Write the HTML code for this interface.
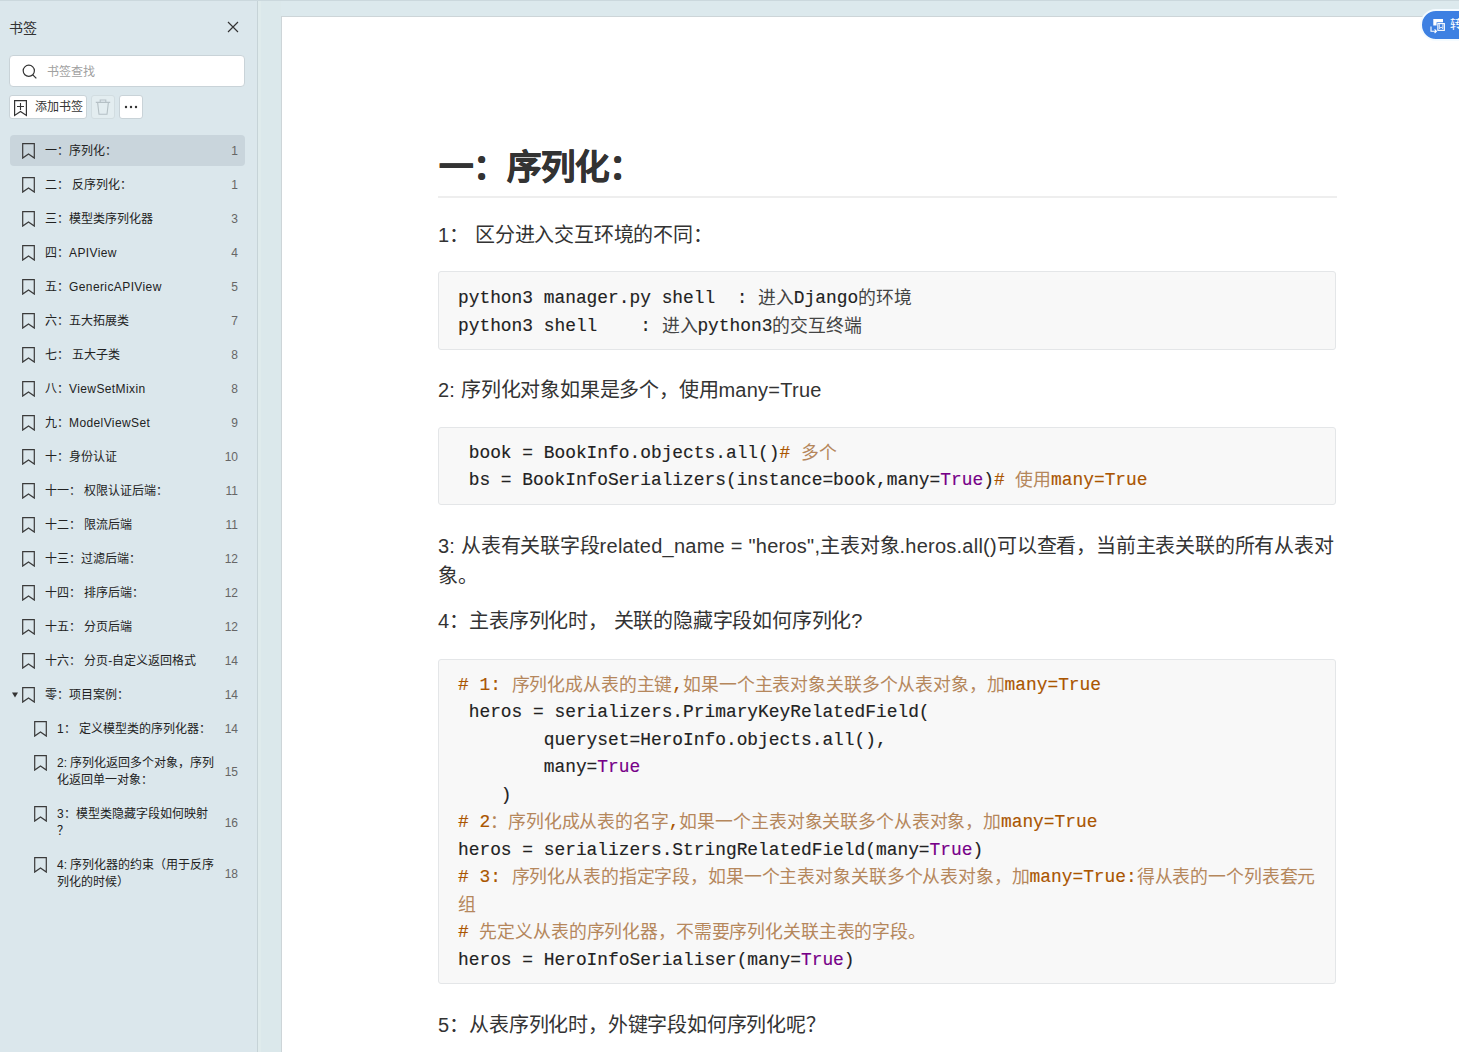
<!DOCTYPE html>
<html lang="zh-CN">
<head>
<meta charset="utf-8">
<style>
html,body{margin:0;padding:0;}
body{width:1459px;height:1052px;overflow:hidden;position:relative;background:#dce9ed;font-family:"Liberation Sans",sans-serif;color:#333;}
.abs{position:absolute;}
#topline{left:0;top:0;width:1459px;height:1px;background:#cbd8dd;}
#sidebar{left:0;top:0;width:257px;height:1052px;background:#dbe7ec;}
#gap{left:261px;top:0;width:20px;height:1052px;background:#dbe8eb;}
#strip{left:258px;top:0;width:3px;height:1052px;background:#dfebec;}
#sbborder{left:257px;top:0;width:1px;height:1052px;background:#c6d3d7;}
#sbtitle{left:9px;top:18px;font-size:14px;line-height:20px;color:#333;}
#close{left:226px;top:20px;width:14px;height:14px;}
#search{left:9px;top:55px;width:234px;height:30px;background:#fff;border:1px solid #c9d3d8;border-radius:4px;}
#search .ph{position:absolute;left:37px;top:8px;font-size:12px;line-height:16px;color:#a0a0a0;}
#search svg{position:absolute;left:12px;top:8px;}
.btn{position:absolute;top:95px;height:22px;background:#fff;border:1px solid #c9d3d8;border-radius:3px;}
#addbtn{left:9px;width:76px;}
#addbtn .t{position:absolute;left:25px;top:2.5px;font-size:12px;line-height:16px;color:#333;}
#delbtn{left:91px;width:22px;background:#e3edf0;border-color:#d2dde1;}
#morebtn{left:119px;width:22px;}
.item{position:absolute;left:10px;width:235px;height:31px;}
.item.sel{background:#c9d5dc;border-radius:4px;}
.item .ic{position:absolute;top:8px;}
.item .tx{position:absolute;top:8px;font-size:12px;line-height:17px;color:#222;white-space:nowrap;}
.lts{letter-spacing:0.4px;}
.item .pg{position:absolute;right:7px;top:8px;font-size:12px;line-height:17px;color:#666;}
#page{left:281px;top:16px;width:1200px;height:1100px;background:#fff;border-top:1px solid #cdd5d8;border-left:1px solid #cdd5d8;}
.p{position:absolute;left:438px;font-size:20px;letter-spacing:-0.2px;line-height:30px;color:#333;white-space:nowrap;}
h1{position:absolute;left:439px;top:0;margin:0;font-size:34.5px;line-height:50px;font-weight:bold;color:#333;-webkit-text-stroke:0.7px #333;white-space:nowrap;}
#hr{left:438px;top:196px;width:899px;height:2px;background:#eeeeee;}
.code{position:absolute;left:438px;width:896px;background:#f8f8f8;border:1px solid #e4e6e8;border-radius:3px;}
.ln{position:absolute;left:19px;height:27.5px;font-family:"Liberation Mono",monospace;font-size:17.87px;line-height:27.5px;color:#222;white-space:pre;-webkit-text-stroke:0.15px currentColor;}
.lt{letter-spacing:0.25px;}
.cm{color:#aa5500;}
.zh{-webkit-text-stroke:0;letter-spacing:-0.14px;position:relative;top:1px;}
.zh{color:#444;}
.cm .zh{color:#b5875c;}
.at{color:#770088;}
#blue{left:1420px;top:9px;width:60px;height:28px;background:#3d80e2;border:2px solid #f4fbff;border-radius:16px;}
</style>
</head>
<body>
<div class="abs" id="sidebar"></div>
<div class="abs" id="sbborder"></div>
<div class="abs" id="strip"></div>
<div class="abs" id="gap"></div>
<div class="abs" id="topline"></div>
<div class="abs" id="page"></div>

<!-- sidebar header -->
<div class="abs" id="sbtitle">书签</div>
<svg class="abs" id="close" viewBox="0 0 14 14"><path d="M2 2L12 12M12 2L2 12" stroke="#333" stroke-width="1.15" fill="none"/></svg>
<div class="abs" id="search">
  <svg width="16" height="16" viewBox="0 0 16 16"><circle cx="6.8" cy="6.8" r="5.6" stroke="#333" stroke-width="1.2" fill="none"/><path d="M10.8 10.8L14.3 14.3" stroke="#333" stroke-width="1.2"/></svg>
  <div class="ph">书签查找</div>
</div>
<div class="btn" id="addbtn">
  <svg style="position:absolute;left:3px;top:3px" width="15" height="18" viewBox="0 0 15 18"><path d="M1.6 1.6H13.4V16.4L7.5 12.4L1.6 16.4Z" stroke="#333" stroke-width="1.2" fill="none"/><path d="M7.5 4V11M4 7.5H11" stroke="#333" stroke-width="1.1"/></svg>
  <div class="t">添加书签</div>
</div>
<div class="btn" id="delbtn">
  <svg style="position:absolute;left:3px;top:3px" width="16" height="16" viewBox="0 0 16 16"><path d="M0.8 3.4H15.2M5.2 3.4V1H10.8V3.4M2.6 3.4L4 15.2H12L13.4 3.4" stroke="#b5c0c5" stroke-width="1.1" fill="none"/></svg>
</div>
<div class="btn" id="morebtn">
  <svg style="position:absolute;left:3px;top:9px" width="16" height="4" viewBox="0 0 16 4"><circle cx="3" cy="2" r="1.2" fill="#333"/><circle cx="8" cy="2" r="1.2" fill="#333"/><circle cx="13" cy="2" r="1.2" fill="#333"/></svg>
</div>

<!-- ITEMS -->
<div class="item sel" style="top:135px;height:31px"><svg class="ic" style="left:12px" width="13" height="16" viewBox="0 0 13 16"><path d="M0.7 0.7H12.3V15.1L6.5 11.1L0.7 15.1Z" stroke="#3a3a3a" stroke-width="1.2" fill="none"/></svg><div class="tx" style="left:35px">一：序列化：</div><div class="pg" style="top:8.0px">1</div></div>
<div class="item" style="top:169px;height:31px"><svg class="ic" style="left:12px" width="13" height="16" viewBox="0 0 13 16"><path d="M0.7 0.7H12.3V15.1L6.5 11.1L0.7 15.1Z" stroke="#3a3a3a" stroke-width="1.2" fill="none"/></svg><div class="tx" style="left:35px">二： 反序列化：</div><div class="pg" style="top:8.0px">1</div></div>
<div class="item" style="top:203px;height:31px"><svg class="ic" style="left:12px" width="13" height="16" viewBox="0 0 13 16"><path d="M0.7 0.7H12.3V15.1L6.5 11.1L0.7 15.1Z" stroke="#3a3a3a" stroke-width="1.2" fill="none"/></svg><div class="tx" style="left:35px">三：模型类序列化器</div><div class="pg" style="top:8.0px">3</div></div>
<div class="item" style="top:237px;height:31px"><svg class="ic" style="left:12px" width="13" height="16" viewBox="0 0 13 16"><path d="M0.7 0.7H12.3V15.1L6.5 11.1L0.7 15.1Z" stroke="#3a3a3a" stroke-width="1.2" fill="none"/></svg><div class="tx" style="left:35px">四：<span class="lts">APIView</span></div><div class="pg" style="top:8.0px">4</div></div>
<div class="item" style="top:271px;height:31px"><svg class="ic" style="left:12px" width="13" height="16" viewBox="0 0 13 16"><path d="M0.7 0.7H12.3V15.1L6.5 11.1L0.7 15.1Z" stroke="#3a3a3a" stroke-width="1.2" fill="none"/></svg><div class="tx" style="left:35px">五：<span class="lts">GenericAPIView</span></div><div class="pg" style="top:8.0px">5</div></div>
<div class="item" style="top:305px;height:31px"><svg class="ic" style="left:12px" width="13" height="16" viewBox="0 0 13 16"><path d="M0.7 0.7H12.3V15.1L6.5 11.1L0.7 15.1Z" stroke="#3a3a3a" stroke-width="1.2" fill="none"/></svg><div class="tx" style="left:35px">六：五大拓展类</div><div class="pg" style="top:8.0px">7</div></div>
<div class="item" style="top:339px;height:31px"><svg class="ic" style="left:12px" width="13" height="16" viewBox="0 0 13 16"><path d="M0.7 0.7H12.3V15.1L6.5 11.1L0.7 15.1Z" stroke="#3a3a3a" stroke-width="1.2" fill="none"/></svg><div class="tx" style="left:35px">七： 五大子类</div><div class="pg" style="top:8.0px">8</div></div>
<div class="item" style="top:373px;height:31px"><svg class="ic" style="left:12px" width="13" height="16" viewBox="0 0 13 16"><path d="M0.7 0.7H12.3V15.1L6.5 11.1L0.7 15.1Z" stroke="#3a3a3a" stroke-width="1.2" fill="none"/></svg><div class="tx" style="left:35px">八：<span class="lts">ViewSetMixin</span></div><div class="pg" style="top:8.0px">8</div></div>
<div class="item" style="top:407px;height:31px"><svg class="ic" style="left:12px" width="13" height="16" viewBox="0 0 13 16"><path d="M0.7 0.7H12.3V15.1L6.5 11.1L0.7 15.1Z" stroke="#3a3a3a" stroke-width="1.2" fill="none"/></svg><div class="tx" style="left:35px">九：<span class="lts">ModelViewSet</span></div><div class="pg" style="top:8.0px">9</div></div>
<div class="item" style="top:441px;height:31px"><svg class="ic" style="left:12px" width="13" height="16" viewBox="0 0 13 16"><path d="M0.7 0.7H12.3V15.1L6.5 11.1L0.7 15.1Z" stroke="#3a3a3a" stroke-width="1.2" fill="none"/></svg><div class="tx" style="left:35px">十：身份认证</div><div class="pg" style="top:8.0px">10</div></div>
<div class="item" style="top:475px;height:31px"><svg class="ic" style="left:12px" width="13" height="16" viewBox="0 0 13 16"><path d="M0.7 0.7H12.3V15.1L6.5 11.1L0.7 15.1Z" stroke="#3a3a3a" stroke-width="1.2" fill="none"/></svg><div class="tx" style="left:35px">十一： 权限认证后端：</div><div class="pg" style="top:8.0px">11</div></div>
<div class="item" style="top:509px;height:31px"><svg class="ic" style="left:12px" width="13" height="16" viewBox="0 0 13 16"><path d="M0.7 0.7H12.3V15.1L6.5 11.1L0.7 15.1Z" stroke="#3a3a3a" stroke-width="1.2" fill="none"/></svg><div class="tx" style="left:35px">十二： 限流后端</div><div class="pg" style="top:8.0px">11</div></div>
<div class="item" style="top:543px;height:31px"><svg class="ic" style="left:12px" width="13" height="16" viewBox="0 0 13 16"><path d="M0.7 0.7H12.3V15.1L6.5 11.1L0.7 15.1Z" stroke="#3a3a3a" stroke-width="1.2" fill="none"/></svg><div class="tx" style="left:35px">十三：过滤后端：</div><div class="pg" style="top:8.0px">12</div></div>
<div class="item" style="top:577px;height:31px"><svg class="ic" style="left:12px" width="13" height="16" viewBox="0 0 13 16"><path d="M0.7 0.7H12.3V15.1L6.5 11.1L0.7 15.1Z" stroke="#3a3a3a" stroke-width="1.2" fill="none"/></svg><div class="tx" style="left:35px">十四： 排序后端：</div><div class="pg" style="top:8.0px">12</div></div>
<div class="item" style="top:611px;height:31px"><svg class="ic" style="left:12px" width="13" height="16" viewBox="0 0 13 16"><path d="M0.7 0.7H12.3V15.1L6.5 11.1L0.7 15.1Z" stroke="#3a3a3a" stroke-width="1.2" fill="none"/></svg><div class="tx" style="left:35px">十五： 分页后端</div><div class="pg" style="top:8.0px">12</div></div>
<div class="item" style="top:645px;height:31px"><svg class="ic" style="left:12px" width="13" height="16" viewBox="0 0 13 16"><path d="M0.7 0.7H12.3V15.1L6.5 11.1L0.7 15.1Z" stroke="#3a3a3a" stroke-width="1.2" fill="none"/></svg><div class="tx" style="left:35px">十六： 分页-自定义返回格式</div><div class="pg" style="top:8.0px">14</div></div>
<div class="item" style="top:679px;height:31px"><svg class="abs" style="left:2px;top:13px" width="6" height="6" viewBox="0 0 6 6"><path d="M0 0.5H6L3 5.5Z" fill="#333"/></svg><svg class="ic" style="left:12px" width="13" height="16" viewBox="0 0 13 16"><path d="M0.7 0.7H12.3V15.1L6.5 11.1L0.7 15.1Z" stroke="#3a3a3a" stroke-width="1.2" fill="none"/></svg><div class="tx" style="left:35px">零：项目案例：</div><div class="pg" style="top:8.0px">14</div></div>
<div class="item" style="top:713px;height:31px"><svg class="ic" style="left:24px" width="13" height="16" viewBox="0 0 13 16"><path d="M0.7 0.7H12.3V15.1L6.5 11.1L0.7 15.1Z" stroke="#3a3a3a" stroke-width="1.2" fill="none"/></svg><div class="tx" style="left:47px">1：  定义模型类的序列化器：</div><div class="pg" style="top:8.0px">14</div></div>
<div class="item" style="top:747px;height:48px"><svg class="ic" style="left:24px" width="13" height="16" viewBox="0 0 13 16"><path d="M0.7 0.7H12.3V15.1L6.5 11.1L0.7 15.1Z" stroke="#3a3a3a" stroke-width="1.2" fill="none"/></svg><div class="tx" style="left:47px">2: 序列化返回多个对象，序列<br>化返回单一对象：</div><div class="pg" style="top:16.5px">15</div></div>
<div class="item" style="top:798px;height:48px"><svg class="ic" style="left:24px" width="13" height="16" viewBox="0 0 13 16"><path d="M0.7 0.7H12.3V15.1L6.5 11.1L0.7 15.1Z" stroke="#3a3a3a" stroke-width="1.2" fill="none"/></svg><div class="tx" style="left:47px">3：模型类隐藏字段如何映射<br>？</div><div class="pg" style="top:16.5px">16</div></div>
<div class="item" style="top:849px;height:48px"><svg class="ic" style="left:24px" width="13" height="16" viewBox="0 0 13 16"><path d="M0.7 0.7H12.3V15.1L6.5 11.1L0.7 15.1Z" stroke="#3a3a3a" stroke-width="1.2" fill="none"/></svg><div class="tx" style="left:47px">4: 序列化器的约束（用于反序<br>列化的时候）</div><div class="pg" style="top:16.5px">18</div></div>

<!-- MAIN -->
<h1 style="top:142px">一：序列化：</h1>
<div class="abs" id="hr"></div>
<div class="p" style="top:220px"><span class="lt">1</span>：<span class="lt">  </span>区分进入交互环境的不同：</div>
<div class="code" style="top:271px;height:77px"><div class="ln" style="top:13.0px">python3 manager.py shell  : <span class="zh">进入</span>Django<span class="zh">的环境</span></div><div class="ln" style="top:41.0px">python3 shell    : <span class="zh">进入</span>python3<span class="zh">的交互终端</span></div></div>
<div class="p" style="top:375px"><span class="lt">2: </span>序列化对象如果是多个，使用<span class="lt">many=True</span></div>
<div class="code" style="top:427px;height:76px"><div class="ln" style="top:11.5px"> book = BookInfo.objects.all()<span class="cm"># <span class="zh">多个</span></span></div><div class="ln" style="top:39.0px"> bs = BookInfoSerializers(instance=book,many=<span class="at">True</span>)<span class="cm"># <span class="zh">使用</span>many=True</span></div></div>
<div class="p" style="top:530.5px"><span class="lt">3: </span>从表有关联字段<span class="lt">related_name = "heros",</span>主表对象<span class="lt">.heros.all()</span>可以查看，当前主表关联的所有从表对<br>象。</div>
<div class="p" style="top:606px"><span class="lt">4</span>：主表序列化时，<span class="lt"> </span>关联的隐藏字段如何序列化<span class="lt">?</span></div>
<div class="code" style="top:659px;height:323px"><div class="ln" style="top:11.5px"><span class="cm"># 1: <span class="zh">序列化成从表的主键</span>,<span class="zh">如果一个主表对象关联多个从表对象，加</span>many=True</span></div><div class="ln" style="top:39.0px"> heros = serializers.PrimaryKeyRelatedField(</div><div class="ln" style="top:66.5px">        queryset=HeroInfo.objects.all(),</div><div class="ln" style="top:94.0px">        many=<span class="at">True</span></div><div class="ln" style="top:121.5px">    )</div><div class="ln" style="top:149.0px"><span class="cm"># 2<span class="zh">：序列化成从表的名字</span>,<span class="zh">如果一个主表对象关联多个从表对象，加</span>many=True</span></div><div class="ln" style="top:176.5px">heros = serializers.StringRelatedField(many=<span class="at">True</span>)</div><div class="ln" style="top:204.0px"><span class="cm"># 3: <span class="zh">序列化从表的指定字段，如果一个主表对象关联多个从表对象，加</span>many=True:<span class="zh">得从表的一个列表套元</span></span></div><div class="ln" style="top:231.5px"><span class="cm"><span class="zh">组</span></span></div><div class="ln" style="top:259.0px"><span class="cm"># <span class="zh">先定义从表的序列化器，不需要序列化关联主表的字段。</span></span></div><div class="ln" style="top:286.5px">heros = HeroInfoSerialiser(many=<span class="at">True</span>)</div></div>
<div class="p" style="top:1009.5px"><span class="lt">5</span>：从表序列化时，外键字段如何序列化呢？</div>

<div class="abs" id="blue"></div>
<svg class="abs" style="left:1428px;top:17px" width="20" height="18" viewBox="0 0 20 18"><path d="M5.3 2H15V5.3H8.6V8.5H5.3Z" fill="#fff"/><rect x="9.85" y="6.6" width="6.5" height="6.75" fill="#3d80e2" stroke="#fff" stroke-width="1.1"/><path d="M11.3 7.2V11.6L13.1 10.2L14.9 11.6V7.2" fill="none" stroke="#fff" stroke-width="0.9"/><path d="M3 9.5V14.2H8.3M6.6 12.4L8.4 14.2L6.6 16" fill="none" stroke="#fff" stroke-width="1.1"/></svg>
<div class="abs" style="left:1450px;top:17px;font-size:12px;line-height:16px;color:#fff;white-space:nowrap">转</div>
</body>
</html>
